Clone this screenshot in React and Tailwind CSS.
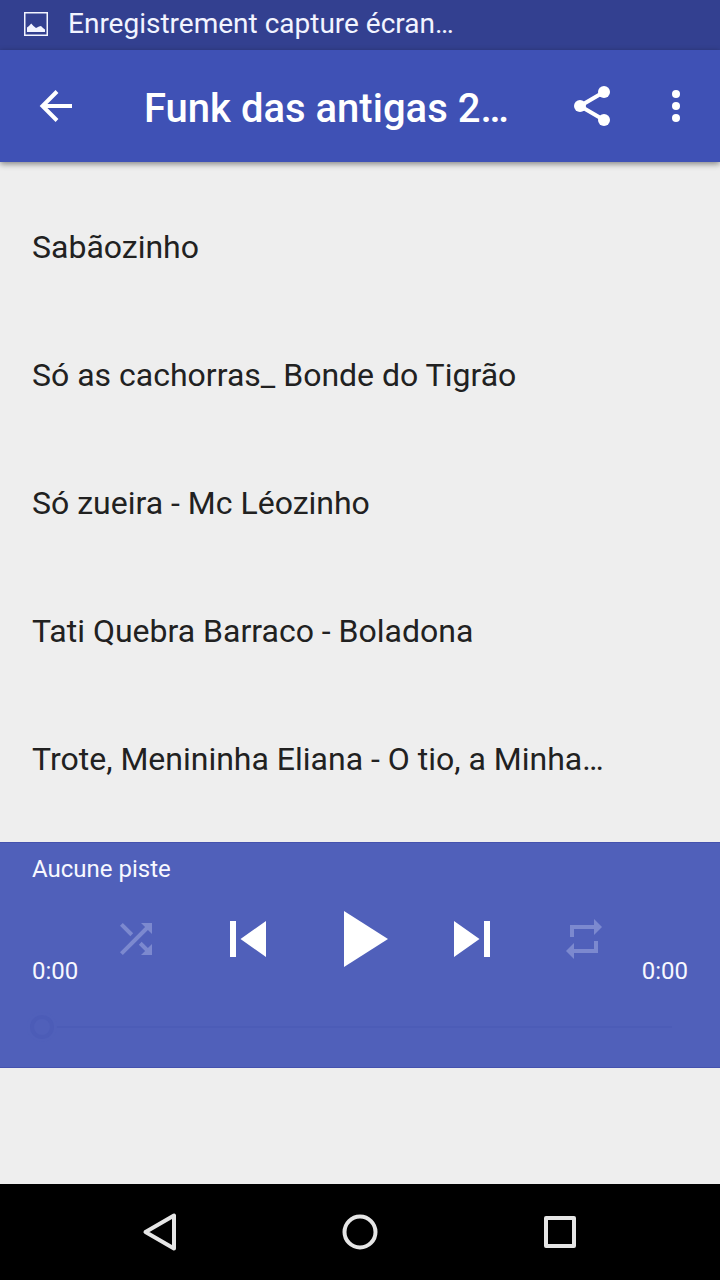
import React, { useState } from 'react';

const tracks = [
  'Sabãozinho',
  'Só as cachorras_ Bonde do Tigrão',
  'Só zueira - Mc Léozinho',
  'Tati Quebra Barraco - Boladona',
  'Trote, Menininha Eliana - O tio, a Minha…'
];

const Icon = ({ d, className }) => (
  <svg viewBox="0 0 24 24" fill="currentColor" className={className} aria-hidden="true">
    <path d={d} />
  </svg>
);

const StatusBar = () => (
  <div className="flex h-[50px] items-center gap-5 bg-[#334090] px-6 pb-0.5 text-[#f2f4ff]">
    <svg viewBox="0 0 24 24" className="size-6 shrink-0" fill="none" aria-hidden="true">
      <rect x="0.75" y="0.75" width="22.5" height="22.5" stroke="currentColor" strokeWidth="1.5" />
      <path d="M3 20v-4.500l2-1.500 2.200-2.500L9.500 14l2.500 2 3-1.500 2-.5 2 2 2 1.500V20z" fill="currentColor" />
    </svg>
    <span className="truncate text-[28px] leading-9">Enregistrement capture écran…</span>
  </div>
);

const Toolbar = () => (
  <header className="relative flex h-28 items-center bg-[#3f51b5] px-8 text-white shadow-[0_2px_6px_rgba(0,0,0,0.45)]">
    <button type="button" aria-label="Retour" className="shrink-0">
      <svg viewBox="0 0 48 48" className="size-12" fill="none" stroke="currentColor" strokeWidth="4" aria-hidden="true">
        <path d="M25 9.500L10.500 24 25 38.500M11 24h29" />
      </svg>
    </button>
    <h1 className="ml-16 min-w-0 flex-1 truncate pt-1.5 text-[40px] leading-[48px] font-medium">Funk das antigas 2…</h1>
    <button type="button" aria-label="Partager" className="shrink-0">
      <svg viewBox="0 0 24 24" className="size-12" fill="currentColor" aria-hidden="true">
        <path d="M18 5L6 12l12 7" fill="none" stroke="currentColor" strokeWidth="2" />
        <circle cx="18" cy="5" r="3" />
        <circle cx="6" cy="12" r="3" />
        <circle cx="18" cy="19" r="3" />
      </svg>
    </button>
    <button type="button" aria-label="Plus d'options" className="-mr-3 ml-9 shrink-0">
      <svg viewBox="0 0 24 24" className="size-12" fill="currentColor" aria-hidden="true">
        <circle cx="12" cy="6" r="2" />
        <circle cx="12" cy="12" r="2" />
        <circle cx="12" cy="18" r="2" />
      </svg>
    </button>
  </header>
);

const Player = () => {
  const [position, setPosition] = useState(0);

  return (
    <section className="border-y border-[#4552ae] bg-[#5060ba] pt-2.5 pb-5 text-[#f7f8ff]">
      <p className="truncate px-8 text-2xl leading-8">Aucune piste</p>

      <div className="mt-1.5 flex items-end px-8">
        <span className="w-12 text-2xl leading-8">0:00</span>
        <div className="flex h-24 flex-1 items-center justify-around">
          <button type="button" aria-label="Lecture aléatoire" className="flex w-24 justify-center text-[#7c89cf]">
            <Icon className="size-12" d="M10.590 9.170L5.410 4 4 5.410l5.170 5.170 1.420-1.410zM14.500 4l2.040 2.040L4 18.590 5.410 20 17.960 7.460 20 9.500V4h-5.500zm.33 9.410l-1.410 1.410 3.130 3.130L14.500 20H20v-5.500l-2.040 2.040-3.130-3.130z" />
          </button>
          <button type="button" aria-label="Piste précédente" className="flex w-24 justify-center text-white">
            <Icon className="size-[72px]" d="M6 6h2v12H6zm3.500 6l8.500 6V6z" />
          </button>
          <button type="button" aria-label="Lecture" className="flex w-24 justify-center text-white">
            <Icon className="size-24" d="M8 5v14l11-7z" />
          </button>
          <button type="button" aria-label="Piste suivante" className="flex w-24 justify-center text-white">
            <Icon className="size-[72px]" d="M6 18l8.500-6L6 6v12zM16 6v12h2V6h-2z" />
          </button>
          <button type="button" aria-label="Répéter" className="flex w-24 justify-center text-[#7c89cf]">
            <Icon className="size-12" d="M7 7h10v3l4-4-4-4v3H5v6h2V7zm10 10H7v-3l-4 4 4 4v-3h12v-6h-2v4z" />
          </button>
        </div>
        <span className="w-12 text-right text-2xl leading-8">0:00</span>
      </div>

      <div className="mt-5 flex h-10 items-center pr-12 pl-[30px]">
        <input
          type="range"
          min="0"
          max="100"
          value={position}
          onChange={(e) => setPosition(Number(e.target.value))}
          disabled
          aria-label="Position de lecture"
          className="h-6 w-full appearance-none bg-transparent [&::-webkit-slider-runnable-track]:h-[2px] [&::-webkit-slider-runnable-track]:bg-[#4c5cb7] [&::-webkit-slider-thumb]:-mt-[11px] [&::-webkit-slider-thumb]:size-6 [&::-webkit-slider-thumb]:appearance-none [&::-webkit-slider-thumb]:rounded-full [&::-webkit-slider-thumb]:border-4 [&::-webkit-slider-thumb]:border-[#4c5cb7] [&::-webkit-slider-thumb]:bg-[#5060ba] [&::-webkit-slider-thumb]:shadow-[0_0_0_3px_#5060ba]"
        />
      </div>
    </section>
  );
};

const NavBar = () => (
  <nav className="flex h-24 items-center bg-black px-[60px] text-[#e6e6e6]">
    <button type="button" aria-label="Précédent" className="flex flex-1 justify-center">
      <svg viewBox="0 0 48 48" className="size-12" fill="none" stroke="currentColor" strokeWidth="4" strokeLinejoin="round" aria-hidden="true">
        <path d="M38 7.500v33L9.500 24z" />
      </svg>
    </button>
    <button type="button" aria-label="Accueil" className="flex flex-1 justify-center">
      <svg viewBox="0 0 48 48" className="size-12" fill="none" stroke="currentColor" strokeWidth="4" aria-hidden="true">
        <circle cx="24" cy="24" r="15.500" />
      </svg>
    </button>
    <button type="button" aria-label="Applications récentes" className="flex flex-1 justify-center">
      <svg viewBox="0 0 48 48" className="size-12" fill="none" stroke="currentColor" strokeWidth="4" strokeLinejoin="round" aria-hidden="true">
        <rect x="10" y="10" width="28" height="28" />
      </svg>
    </button>
  </nav>
);

const App = () => (
  <div className="flex min-h-screen flex-col bg-[#eeeeee] font-['Roboto',sans-serif]">
    <StatusBar />
    <Toolbar />
    <main className="flex-1 pt-[21px]">
      <ul>
        {tracks.map((track) => (
          <li key={track}>
            <button type="button" className="flex h-32 w-full items-center px-8 text-left text-[#212121]">
              <span className="truncate text-[32px] leading-10">{track}</span>
            </button>
          </li>
        ))}
      </ul>
    </main>
    <Player />
    <div className="h-[116px]" />
    <NavBar />
  </div>
);

export default App;
